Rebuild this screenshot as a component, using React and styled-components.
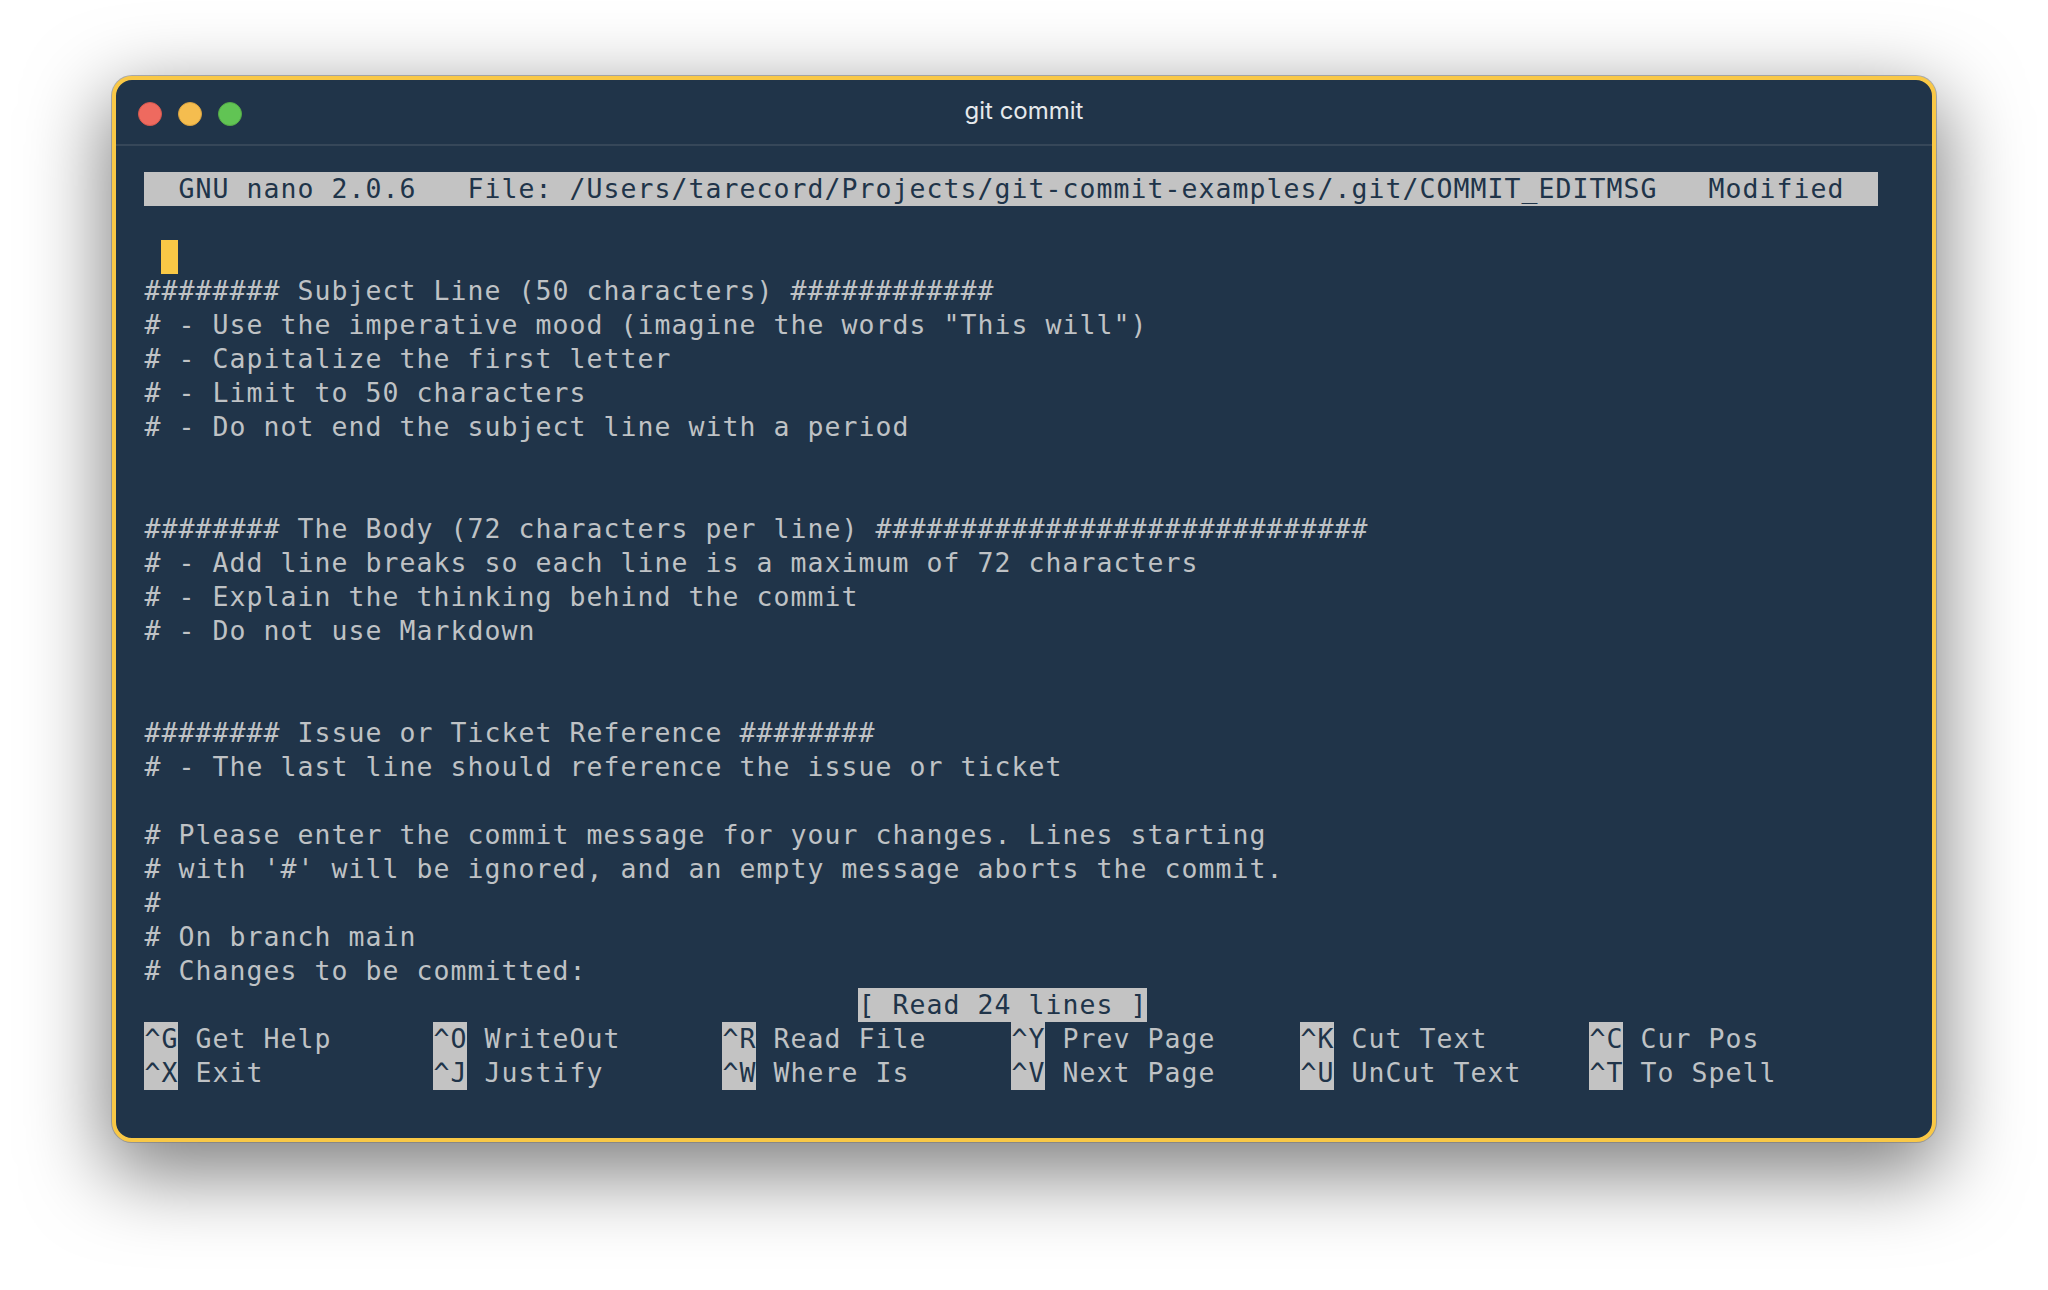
import React from "react";
import styled, { createGlobalStyle } from "styled-components";

const Global = createGlobalStyle`
  html, body { margin: 0; padding: 0; background: #fff; }
  body { width: 2048px; height: 1290px; overflow: hidden; }
`;

const Page = styled.div`
  box-sizing: border-box;
  width: 2048px;
  height: 1290px;
  padding: 76px 112px 0;
  background: #fff;
`;

const Window = styled.div`
  box-sizing: border-box;
  width: 1824px;
  height: 1066px;
  display: flex;
  flex-direction: column;
  background: #203449;
  border: 4px solid #f9c846;
  border-radius: 20px;
  box-shadow: 0 0 0 1px rgba(120, 120, 120, 0.55), 0 26px 80px 6px rgba(0, 0, 0, 0.5);
  overflow: hidden;
`;

const TitleBar = styled.div`
  position: relative;
  box-sizing: border-box;
  height: 66px;
  flex: none;
  display: flex;
  align-items: center;
  justify-content: center;
  border-bottom: 2px solid #364759;
`;

const Lights = styled.div`
  position: absolute;
  left: 22px;
  top: 22px;
  display: flex;
  gap: 16px;
`;

const Light = styled.span`
  box-sizing: border-box;
  width: 24px;
  height: 24px;
  border-radius: 50%;
  background: ${(p) => p.$fill};
  border: 1px solid ${(p) => p.$edge};
`;

const Title = styled.div`
  font-family: Inter, "Liberation Sans", sans-serif;
  font-size: 24px;
  line-height: 32px;
  margin-top: -2px;
  color: #e6e9ec;
`;

const Terminal = styled.div`
  flex: 1;
  padding: 26px 0 0 28px;
  font-family: "DejaVu Sans Mono", "Liberation Mono", monospace;
  font-size: 26.5px;
  letter-spacing: 1.046px;
  color: #bfc2c5;
`;

const Line = styled.div`
  height: 34px;
  line-height: 34px;
  white-space: pre;
  text-indent: 0.5px;
`;

const HeaderBar = styled(Line)`
  width: 1734px;
  background: #c3c3c3;
  color: #203449;
`;

const CursorLine = styled(Line)`
  padding-left: 17px;
`;

const Cursor = styled.span`
  display: block;
  width: 17px;
  height: 34px;
  background: #f9c846;
`;

const Notice = styled(Line)`
  margin-left: 714px;
  width: 289px;
  background: #c3c3c3;
  color: #203449;
`;

const ShortcutRow = styled.div`
  display: grid;
  grid-template-columns: repeat(6, 289px);
  height: 34px;
  line-height: 34px;
`;

const Shortcut = styled.div`
  display: flex;
  white-space: pre;
`;

const Key = styled.span`
  width: 34px;
  background: #c3c3c3;
  color: #203449;
  text-indent: 0.5px;
`;

const Label = styled.span`
  margin-left: 17.5px;
`;

const subject = [
  "######## Subject Line (50 characters) ############",
  '# - Use the imperative mood (imagine the words "This will")',
  "# - Capitalize the first letter",
  "# - Limit to 50 characters",
  "# - Do not end the subject line with a period",
  "",
  "",
  "######## The Body (72 characters per line) #############################",
  "# - Add line breaks so each line is a maximum of 72 characters",
  "# - Explain the thinking behind the commit",
  "# - Do not use Markdown",
  "",
  "",
  "######## Issue or Ticket Reference ########",
  "# - The last line should reference the issue or ticket",
  "",
  "# Please enter the commit message for your changes. Lines starting",
  "# with '#' will be ignored, and an empty message aborts the commit.",
  "#",
  "# On branch main",
  "# Changes to be committed:",
];

const shortcuts = [
  [["^G", "Get Help"], ["^O", "WriteOut"], ["^R", "Read File"], ["^Y", "Prev Page"], ["^K", "Cut Text"], ["^C", "Cur Pos"]],
  [["^X", "Exit"], ["^J", "Justify"], ["^W", "Where Is"], ["^V", "Next Page"], ["^U", "UnCut Text"], ["^T", "To Spell"]],
];

export default function App() {
  return (
    <Page>
      <Global />
      <Window>
        <TitleBar>
          <Lights>
            <Light $fill="#ee6a5f" $edge="#d5574d" />
            <Light $fill="#f5bd4f" $edge="#d9a23f" />
            <Light $fill="#61c454" $edge="#53a947" />
          </Lights>
          <Title>git commit</Title>
        </TitleBar>
        <Terminal>
          <HeaderBar>{"  GNU nano 2.0.6   File: /Users/tarecord/Projects/git-commit-examples/.git/COMMIT_EDITMSG   Modified"}</HeaderBar>
          <Line />
          <CursorLine><Cursor /></CursorLine>
          {subject.map((text, i) => (
            <Line key={i}>{text}</Line>
          ))}
          <Notice>{"[ Read 24 lines ]"}</Notice>
          {shortcuts.map((row, r) => (
            <ShortcutRow key={r}>
              {row.map(([k, label]) => (
                <Shortcut key={k}>
                  <Key>{k}</Key>
                  <Label>{label}</Label>
                </Shortcut>
              ))}
            </ShortcutRow>
          ))}
        </Terminal>
      </Window>
    </Page>
  );
}
